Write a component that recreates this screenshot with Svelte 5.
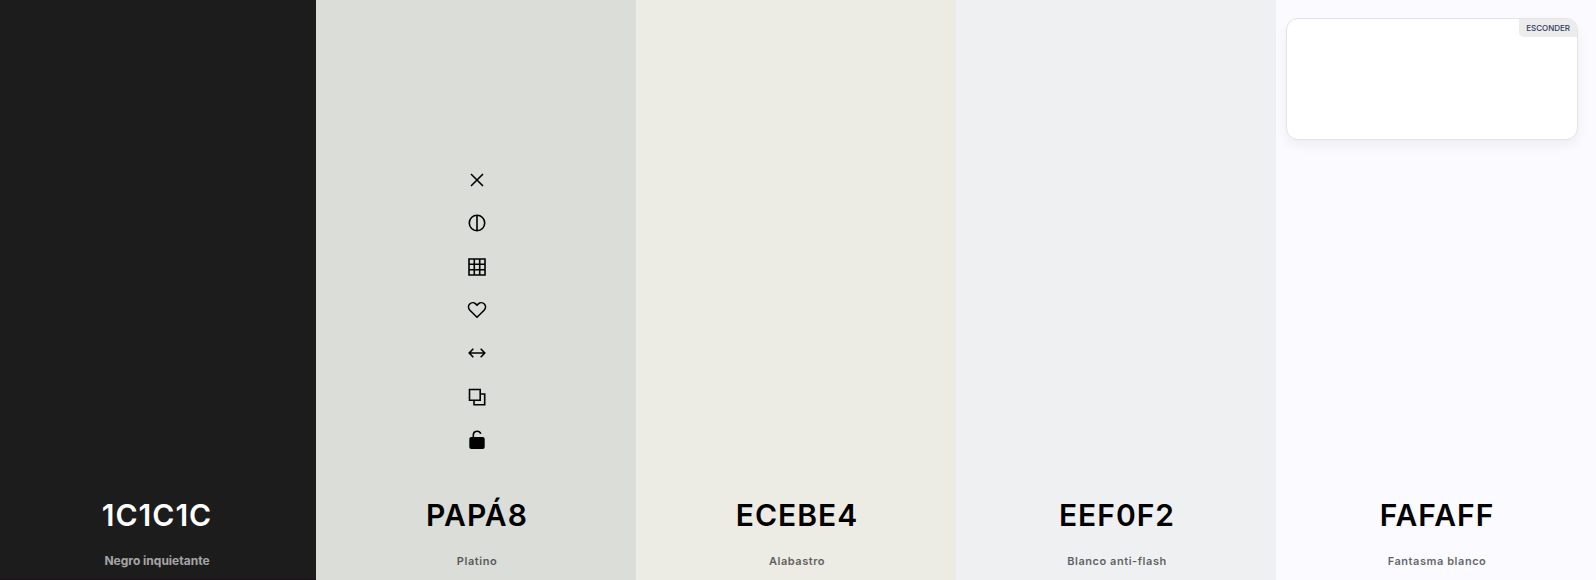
<script>
  const swatches = [
    { hex: '1C1C1C', fill: '#1c1c1c', name: 'Negro inquietante', dark: true },
    { hex: 'PAPÁ8', fill: '#daddd8', name: 'Platino', tools: true },
    { hex: 'ECEBE4', fill: '#ecebe4', name: 'Alabastro' },
    { hex: 'EEF0F2', fill: '#eef0f2', name: 'Blanco anti-flash' },
    { hex: 'FAFAFF', fill: '#fafaff', name: 'Fantasma blanco' }
  ];
  const tools = [
    { label: 'Quitar color', d: 'M4 4 16 16M16 4 4 16' },
    { label: 'Ver tonos', d: 'M10 2.3a7.7 7.7 0 1 0 0 15.4a7.7 7.7 0 0 0 0-15.4ZM10 2.3V17.7' },
    { label: 'Ver paleta', d: 'M2 2H18V18H2ZM2 7.3H18M2 12.7H18M7.3 2V18M12.7 2V18' },
    { label: 'Guardar color', d: 'M10 17.2 2.9 10.2C1.1 8.3 1.1 5.6 2.7 4C4.4 2.3 7 2.3 8.6 3.8L10 5.1 11.4 3.8C13 2.3 15.6 2.3 17.3 4C18.9 5.6 18.9 8.3 17.1 10.2Z' },
    { label: 'Arrastrar', d: 'M2.5 10H17.5M6.3 5.8 2.2 10 6.3 14.2M13.7 5.8 17.8 10 13.7 14.2' },
    { label: 'Copiar', d: 'M2.5 2.5H13.2V13.2H2.5ZM13.2 7H17.7V17.7H7V13.2' },
    { label: 'Bloquear', d: 'M6.3 7.5V5C6.3 .4 12.4 0 13.8 3.8', lock: true }
  ];
  let hidden = $state(false);
</script>

<main>
  <div class="palette">
    {#each swatches as s}
      <section class="swatch" class:dark={s.dark} style:background-color={s.fill}>
        {#if s.tools}
          <div class="tools">
            {#each tools as t}
              <button class="tool" aria-label={t.label}>
                <svg viewBox="0 0 20 20" width="20" height="20" aria-hidden="true">
                  <path d={t.d} />
                  {#if t.lock}<rect class="solid" x="2.3" y="7" width="15.4" height="12" rx="2" />{/if}
                </svg>
              </button>
            {/each}
          </div>
        {/if}
        <button class="hex">{s.hex}</button>
        <button class="name">{s.name}</button>
      </section>
    {/each}
  </div>
  {#if !hidden}
    <aside class="card">
      <button class="hide" onclick={() => (hidden = true)}>ESCONDER</button>
    </aside>
  {/if}
</main>

<style>
  :global(body) { margin: 0; }
  main {
    position: relative;
    min-height: 100vh;
    overflow: hidden;
    font-family: Inter, sans-serif;
  }
  .palette {
    display: grid;
    grid-template-columns: repeat(5, 1fr);
    min-height: 100vh;
    margin-left: -4px;
  }
  .swatch {
    box-sizing: border-box;
    display: flex;
    flex-direction: column;
    align-items: center;
    justify-content: flex-end;
    padding: 0 0 9px 2px;
    color: #000;
  }
  .dark {
    color: #fff;
    box-shadow: inset 0 -1px #1a1218;
  }
  button {
    margin: 0;
    padding: 0;
    border: 0;
    background: none;
    color: inherit;
    font-family: inherit;
    cursor: pointer;
  }
  .tools {
    display: flex;
    flex-direction: column;
    justify-content: space-between;
    height: 304px;
    margin-bottom: 30px;
  }
  .tool {
    display: grid;
    place-items: center;
    width: 44px;
    height: 44px;
  }
  svg {
    fill: none;
    stroke: currentColor;
    stroke-width: 1.6;
  }
  .solid {
    fill: currentColor;
    stroke: none;
  }
  .hex {
    margin-bottom: 13px;
    font-size: 30px;
    font-weight: 600;
    line-height: 46px;
    letter-spacing: 1px;
  }
  .name {
    font-size: 11px;
    font-weight: 600;
    line-height: 20px;
    letter-spacing: 0.05em;
    opacity: 0.6;
  }
  .dark .name {
    font-size: 12px;
    font-weight: 700;
    letter-spacing: 0;
  }
  .card {
    position: absolute;
    top: 18px;
    right: 18px;
    box-sizing: border-box;
    width: 292px;
    height: 122px;
    overflow: hidden;
    border: 1px solid #e3e3e8;
    border-radius: 12px;
    background: #fff;
    box-shadow: 0 6px 12px rgb(0 0 0 / 5%);
  }
  .hide {
    position: absolute;
    top: 0;
    right: 0;
    padding: 0 7px;
    border-bottom-left-radius: 5px;
    background: #ececec;
    color: #2c3a5c;
    font-size: 8px;
    font-weight: 500;
    line-height: 18px;
  }
</style>
